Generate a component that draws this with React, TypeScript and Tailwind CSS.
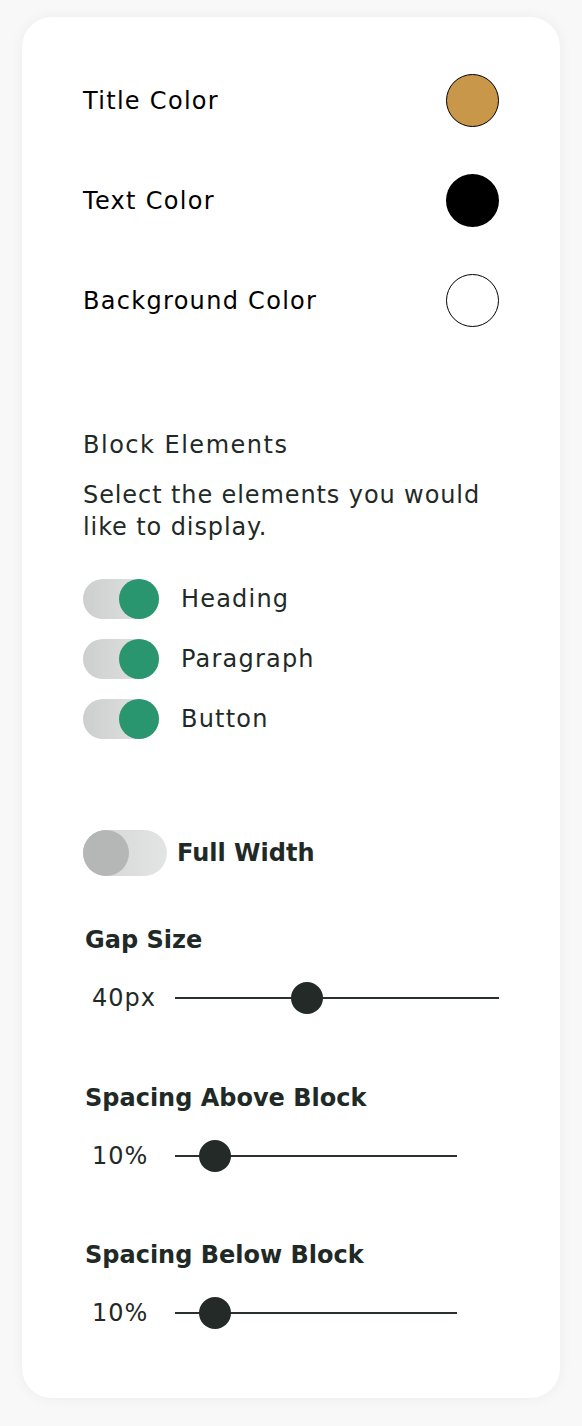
import React from 'react';

const colorRows = [
  { label: 'Title Color', swatch: 'bg-[#c9974a] border-[1.5px] border-black' },
  { label: 'Text Color', swatch: 'bg-black' },
  { label: 'Background Color', swatch: 'bg-white border-[1.5px] border-black' },
];

const elements = ['Heading', 'Paragraph', 'Button'];

const sliders = [
  { label: 'Gap Size', value: '40px', width: 'w-[324px]', thumb: 'left-[116px]', gap: 'mt-[50px]' },
  { label: 'Spacing Above Block', value: '10%', width: 'w-[282px]', thumb: 'left-[24px]', gap: 'mt-[70px]' },
  { label: 'Spacing Below Block', value: '10%', width: 'w-[282px]', thumb: 'left-[24px]', gap: 'mt-[69px]' },
];

const App: React.FC = () => {
  return (
    <div
      className="min-h-[1426px] bg-[#f8f8f8] pt-[17px] pl-[22px]"
      style={{ fontFamily: '"DejaVu Sans", "Noto Sans", sans-serif' }}
    >
      <div className="w-[538px] h-[1381px] rounded-[30px] bg-white shadow-[0_0_14px_rgba(0,0,0,0.05)] pt-[57px] pl-[61px] pr-[61px]">
        {/* colours */}
        <div className="flex flex-col gap-[47px]">
          {colorRows.map((row) => (
            <div key={row.label} className="flex items-center justify-between h-[53px]">
              <span className="text-[24px] text-black tracking-[1.3px]">{row.label}</span>
              <span className={`w-[53px] h-[53px] rounded-full ${row.swatch}`}></span>
            </div>
          ))}
        </div>

        {/* block elements */}
        <h3 className="mt-[104px] text-[24px] leading-[28px] text-[#1f2a27] tracking-[1.5px]">Block Elements</h3>
        <p className="mt-[20px] text-[24px] leading-[32px] text-[#1f2a27] w-[416px] tracking-[0.9px]">
          Select the elements you would like to display.
        </p>
        <div className="mt-[36px] flex flex-col gap-[20px]">
          {elements.map((el) => (
            <div key={el} className="flex items-center">
              <div className="w-[76px] h-[40px] rounded-full bg-gradient-to-r from-[#cdcfce] to-[#e3e4e4] flex justify-end">
                <span className="w-[40px] h-[40px] rounded-full bg-[#2a9670]"></span>
              </div>
              <span className="ml-[22px] text-[24px] text-[#1f2a27] tracking-[1.2px]">{el}</span>
            </div>
          ))}
        </div>

        {/* full width */}
        <div className="mt-[91px] flex items-center">
          <div className="w-[84px] h-[46px] rounded-full bg-gradient-to-r from-[#d3d5d4] to-[#e3e4e4]">
            <span className="block w-[46px] h-[46px] rounded-full bg-[#b5b7b6]"></span>
          </div>
          <span className="ml-[10px] text-[24px] font-bold text-[#1f2a27]">Full Width</span>
        </div>

        {/* sliders */}
        {sliders.map((s) => (
          <div key={s.label} className={s.gap}>
            <div className="pl-[2px] text-[24px] leading-[28px] font-bold text-[#1f2a27]">{s.label}</div>
            <div className="mt-[28px] flex items-center h-[32px]">
              <span className="w-[92px] pl-[9px] text-[24px] text-[#1f2a27] tracking-[1px]">{s.value}</span>
              <div className={`relative ${s.width} h-[2px] bg-[#2a302e]`}>
                <span className={`absolute top-[-15px] ${s.thumb} w-[32px] h-[32px] rounded-full bg-[#232a28]`}></span>
              </div>
            </div>
          </div>
        ))}
      </div>
    </div>
  );
};

export default App;
